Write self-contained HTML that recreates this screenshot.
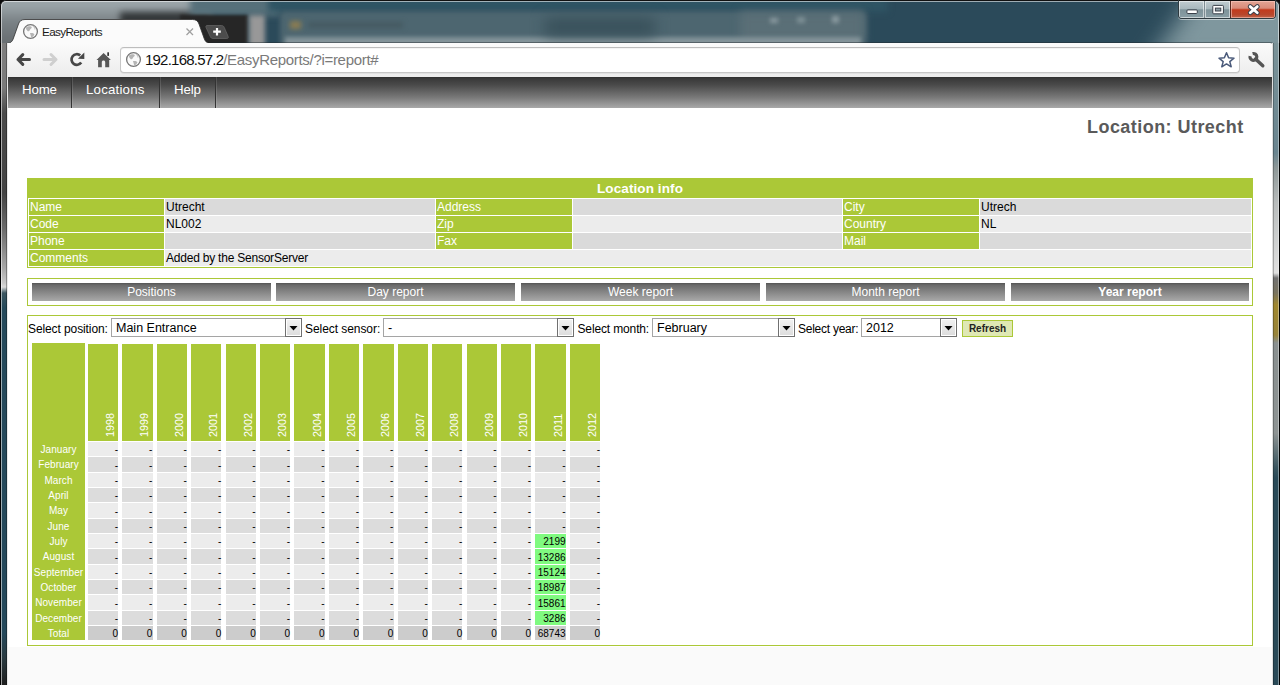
<!DOCTYPE html><html><head><meta charset='utf-8'><style>
*{box-sizing:border-box}
html,body{margin:0;padding:0}
body{width:1280px;height:685px;overflow:hidden;position:relative;background:#0a0a0a;font-family:"Liberation Sans",sans-serif}
.abs{position:absolute}
.t{position:absolute;white-space:nowrap;line-height:1}
</style></head><body>
<div class='abs' style='left:0;top:0;width:1280px;height:685px;background:#2b4a5a;overflow:hidden;border-radius:7px 7px 0 0'>
<div class='abs' style='left:-20px;top:-10px;width:230px;height:60px;background:linear-gradient(180deg,#a2acb0 0px,#9aa4a8 16px,#7c8488 30px,#6a7073 50px);filter:blur(3px)'></div>
<div class='abs' style='left:120px;top:12px;width:90px;height:14px;background:#333739;filter:blur(3px)'></div>
<div class='abs' style='left:190px;top:-10px;width:90px;height:26px;background:#56707a;filter:blur(3px)'></div>
<div class='abs' style='left:180px;top:15px;width:68px;height:40px;background:#262626;filter:blur(1.5px)'></div>
<div class='abs' style='left:249px;top:15px;width:16px;height:40px;background:#989898;filter:blur(2.5px)'></div>
<div class='abs' style='left:268px;top:-10px;width:620px;height:22px;background:#2f5464;filter:blur(3px)'></div>
<div class='abs' style='left:280px;top:11px;width:586px;height:40px;background:#4d6670;filter:blur(2.5px);border-radius:5px'></div><div class='abs' style='left:740px;top:12px;width:124px;height:30px;background:#5a6f77;filter:blur(5px)'></div><div class='abs' style='left:770px;top:18px;width:8px;height:5px;background:#8a9aa0;filter:blur(2px)'></div><div class='abs' style='left:797px;top:17px;width:8px;height:6px;background:#7e9096;filter:blur(2px)'></div><div class='abs' style='left:832px;top:16px;width:7px;height:7px;background:#8a9aa0;filter:blur(2px)'></div>
<div class='abs' style='left:285px;top:37px;width:576px;height:10px;background:#84949a;filter:blur(2px)'></div>
<div class='abs' style='left:545px;top:18px;width:110px;height:18px;background:#38505a;filter:blur(7px)'></div>
<div class='abs' style='left:290px;top:21px;width:11px;height:8px;background:#8a7c52;filter:blur(2.5px)'></div>
<div class='abs' style='left:308px;top:22px;width:95px;height:6px;background:#465a62;filter:blur(2.5px)'></div>
<div class='abs' style='left:1175px;top:-20px;width:200px;height:90px;background:#7f979e;transform:skewX(-35deg);filter:blur(14px)'></div>
</div>
<div class='abs' style='left:0;top:0;width:1280px;height:685px;border:1px solid #111;border-bottom:none;border-radius:6px 6px 0 0'></div>
<div class='abs' style='left:1px;top:1px;width:1278px;height:684px;border:1px solid rgba(255,255,255,0.55);border-bottom:none;border-radius:5px 5px 0 0'></div>
<svg class='abs' style='left:0;top:0' width='260' height='44'>
<path d='M6 43.5 C11 43.5 12.5 41 13.5 38 L18.5 24 C19.5 21 21.5 19.5 25 19.5 L192.5 19.5 C196 19.5 198 21 199 24 L204 38 C205 41 206.5 43.5 211.5 43.5 Z' fill='#fbfbfb' stroke='#2e2e2e' stroke-width='0.8'/>
<path d='M207 25.5 L221.5 25.5 C223 25.5 223.8 26.3 224.3 27.5 L228.2 36.5 C228.6 37.6 228.2 38.5 226.8 38.5 L213 38.5 C211.5 38.5 210.6 37.8 210.2 36.5 L206 27.5 C205.6 26.2 206 25.5 207 25.5 Z' fill='#4c4c4c' stroke='#6e6e6e' stroke-width='0.6'/>
<path d='M217 28 V35.5 M213.2 31.7 H220.8' stroke='#fff' stroke-width='2.2'/>
<path d='M186.5 28.5 L193 35 M193 28.5 L186.5 35' stroke='#a0a0a0' stroke-width='1.3'/>
<circle cx='30.5' cy='31.5' r='6.9' fill='#fafafa' stroke='#767676' stroke-width='1.3'/>
<path d='M25.9 27.7 C27.5 25.9 31.0 25.7 31.7 27.1 C32.1 28.1 30.5 28.9 29.9 29.9 C29.3 31.1 28.3 31.7 27.5 30.9 C26.7 30.1 26.1 29.3 25.9 27.7 Z' fill='#b4b4b4'/>
<path d='M29.9 33.3 C31.3 32.7 33.5 32.9 34.3 34.1 C34.7 35.1 33.1 36.9 31.5 37.5 C30.7 36.5 30.9 35.3 29.9 33.3 Z' fill='#b4b4b4'/>
<path d='M33.0 26.0 C34.5 27.0 35.5 28.5 34.7 29.5' stroke='#c4c4c4' stroke-width='1.2' fill='none'/>
</svg>
<div class='t' style='left:42px;top:25.5px;font-size:11.7px;color:#1a1a1a;letter-spacing:-0.62px'>EasyReports</div>
<div class='abs' style='left:210px;top:42px;width:1064px;height:35px;background:rgba(30,40,45,0.45);border-radius:4px 4px 0 0'></div>
<div class='abs' style='left:8px;top:43px;width:1265px;height:34px;background:linear-gradient(180deg,#fbfbfb,#ececec);border-radius:0 3px 0 0'></div>
<div class='abs' style='left:120px;top:47px;width:1120px;height:26px;background:#fff;border:1px solid #c6c6c6;border-top-color:#bdbdbd;border-radius:4px;box-shadow:inset 0 1px 1px rgba(0,0,0,0.05),0 1px 0 rgba(0,0,0,0.06)'></div>
<svg class='abs' style='left:0;top:43px' width='1280' height='34'>
<path d='M18 16.5 H29.5 M18 16.5 L22.8 11.6 M18 16.5 L22.8 21.4' stroke='#474747' stroke-width='3' fill='none' stroke-linecap='round'/>
<path d='M56 16.5 H44 M56 16.5 L51 11.5 M56 16.5 L51 21.5' stroke='#cfcfcf' stroke-width='3' fill='none' stroke-linecap='round'/>
<path d='M81.22 19.5 A5.3 5.3 0 1 1 80.2 12.4' stroke='#474747' stroke-width='2.7' fill='none'/>
<path d='M84.3 9.6 L84.3 16 L77.9 15.8 Z' fill='#474747'/>
<path d='M96.5 17 L103.6 10 L110.9 17 L109.2 17 L109.2 24.2 L105.2 24.2 L105.2 19.2 C105.2 18.2 104.5 17.6 103.5 17.6 C102.5 17.6 101.8 18.2 101.8 19.2 L101.8 24.2 L98.1 24.2 L98.1 17 Z' fill='#575757'/>
<rect x='107.3' y='9.3' width='1.7' height='3.6' fill='#333'/>
<circle cx='133.5' cy='16.5' r='6.9' fill='#fafafa' stroke='#767676' stroke-width='1.3'/>
<path d='M128.9 12.7 C130.5 10.9 134.0 10.7 134.7 12.1 C135.1 13.1 133.5 13.9 132.9 14.9 C132.3 16.1 131.3 16.7 130.5 15.9 C129.7 15.1 129.1 14.3 128.9 12.7 Z' fill='#b4b4b4'/>
<path d='M132.9 18.3 C134.3 17.7 136.5 17.9 137.3 19.1 C137.7 20.1 136.1 21.9 134.5 22.5 C133.7 21.5 133.9 20.3 132.9 18.3 Z' fill='#b4b4b4'/>
<path d='M136.0 11.0 C137.5 12.0 138.5 13.5 137.7 14.5' stroke='#c4c4c4' stroke-width='1.2' fill='none'/>
<path d='M1226.5 9.8 L1228.6 14.8 L1234 15.2 L1229.8 18.6 L1231.2 23.8 L1226.5 20.9 L1221.8 23.8 L1223.2 18.6 L1219 15.2 L1224.4 14.8 Z' fill='#fff' stroke='#4a5a7a' stroke-width='1.5' stroke-linejoin='round'/>
<path d='M1255.5 16 L1262.8 22.8' stroke='#555' stroke-width='3.4' stroke-linecap='round'/>
<path d='M1252.6 10.6 A3.4 3.4 0 1 1 1250.1 13.1' stroke='#555' stroke-width='3.2' fill='none'/>
</svg>
<div class='t' style='left:145px;top:52px;font-size:15px;color:#111'><span style='letter-spacing:-0.78px'>192.168.57.2</span><span style='color:#7a7a7a;letter-spacing:-0.31px'>/EasyReports/?i=report#</span></div>
<div class='abs' style='left:1178px;top:0px;width:98px;height:19px;border:1px solid #2e3a40;border-top:none;border-radius:0 0 4px 4px;overflow:hidden;box-shadow:0 1px 0 rgba(255,255,255,0.5)'>
<div class='abs' style='left:0;top:1px;width:25px;height:17px;background:linear-gradient(180deg,#c0ccd0 0%,#a8b8bd 45%,#7e939a 52%,#8a9ea5 100%);box-shadow:inset 0 0 0 1px rgba(255,255,255,0.55)'></div>
<div class='abs' style='left:25px;top:1px;width:1px;height:17px;background:#7d8c92'></div>
<div class='abs' style='left:26px;top:1px;width:25px;height:17px;background:linear-gradient(180deg,#c0ccd0 0%,#a8b8bd 45%,#7e939a 52%,#8a9ea5 100%);box-shadow:inset 0 0 0 1px rgba(255,255,255,0.55)'></div>
<div class='abs' style='left:51px;top:1px;width:1px;height:17px;background:#5a2a20'></div>
<div class='abs' style='left:52px;top:1px;width:44px;height:17px;background:linear-gradient(180deg,#e3a595 0%,#d98c7a 42%,#c23b1d 52%,#b8472c 80%,#c0644a 100%);box-shadow:inset 0 0 0 1px rgba(255,210,200,0.55)'></div>
<div class='abs' style='left:0;top:0;width:98px;height:1px;background:#111'></div>
</div>
<svg class='abs' style='left:1170px;top:0' width='110' height='22'>
<rect x='16.9' y='9.9' width='10.4' height='3.6' rx='1' fill='#fff' stroke='#3a404a' stroke-width='1'/>
<rect x='42.8' y='5.4' width='10.6' height='8.4' rx='0.8' fill='#fff' stroke='#3a404a' stroke-width='1'/>
<rect x='45.4' y='8.1' width='5.4' height='2.9' fill='#8ea0a6' stroke='#3a404a' stroke-width='1'/>
<path d='M80.2 6.6 L87.3 12.7 M87.3 6.6 L80.2 12.7' stroke='#3a404a' stroke-width='4.8' stroke-linecap='round'/>
<path d='M80.2 6.6 L87.3 12.7 M87.3 6.6 L80.2 12.7' stroke='#fff' stroke-width='2.8' stroke-linecap='round'/>
</svg>
<div class='abs' style='left:0;top:43px;width:8px;height:642px;background:linear-gradient(180deg,#7e7e7e 0px,#7a7a7a 45px,#4a4a4a 70px,#434343 150px,#6a6a6a 185px,#a8a8a8 225px,#c8c8c8 240px,#dadada 244px,#3c5660 250px,#25495a 265px,#24485a 590px,#2a3a40 615px,#1e1e1e 642px)'></div>
<div class='abs' style='left:0;top:43px;width:1px;height:642px;background:#000'></div>
<div class='abs' style='left:1px;top:43px;width:1px;height:642px;background:rgba(255,255,255,0.55)'></div>
<div class='abs' style='left:6px;top:43px;width:1px;height:642px;background:rgba(0,0,0,0.3)'></div>
<div class='abs' style='left:7px;top:43px;width:1px;height:642px;background:#e8e8e8'></div>
<div class='abs' style='left:1272px;top:43px;width:8px;height:642px;background:linear-gradient(180deg,#7a9298 0px,#6a8590 110px,#8e9898 125px,#b8bcbc 160px,#e0e0e0 230px,#727272 235px,#7a7460 250px,#a08830 262px,#98843a 292px,#8a9090 300px,#8e9494 390px,#3a5660 425px,#2a4a58 435px,#2a4a58 642px)'></div>
<div class='abs' style='left:1279px;top:43px;width:1px;height:642px;background:#000'></div>
<div class='abs' style='left:1278px;top:43px;width:1px;height:642px;background:rgba(255,255,255,0.4)'></div>
<div class='abs' style='left:1273px;top:43px;width:1px;height:642px;background:rgba(0,0,0,0.25)'></div>
<div class='abs' style='left:1272px;top:43px;width:1px;height:642px;background:#e0e0e0'></div>
<div class='abs' style='left:8px;top:77px;width:1264px;height:608px;background:#fafafa'></div>
<div class='abs' style='left:8px;top:77px;width:1264px;height:570px;background:#fff'></div>
<div class='abs' style='left:8px;top:77px;width:1264px;height:31px;background:linear-gradient(180deg,#2e2e2e 0px,#3a3a3a 2px,#4a4a4a 8px,#777 20px,#a8a8a8 31px)'></div>
<div class='abs' style='left:71px;top:77px;width:1px;height:31px;background:#333'></div><div class='abs' style='left:72px;top:77px;width:1px;height:31px;background:rgba(255,255,255,0.12)'></div>
<div class='abs' style='left:159px;top:77px;width:1px;height:31px;background:#333'></div><div class='abs' style='left:160px;top:77px;width:1px;height:31px;background:rgba(255,255,255,0.12)'></div>
<div class='abs' style='left:215px;top:77px;width:1px;height:31px;background:#333'></div><div class='abs' style='left:216px;top:77px;width:1px;height:31px;background:rgba(255,255,255,0.12)'></div>
<div class='t' style='left:22px;top:83.3px;font-size:13.3px;color:#fff;letter-spacing:-0.15px'>Home</div>
<div class='t' style='left:86px;top:83.3px;font-size:13.3px;color:#fff;letter-spacing:0.18px'>Locations</div>
<div class='t' style='left:174px;top:83.3px;font-size:13.3px;color:#fff;letter-spacing:-0.15px'>Help</div>
<div class='t' style='left:1087px;top:118px;font-size:18px;font-weight:bold;color:#5a5a5a;letter-spacing:0.45px'>Location: Utrecht</div>
<div class='abs' style='left:27px;top:178px;width:1226px;height:90px;border:1px solid #abc837;background:#fff'></div>
<div class='abs' style='left:28px;top:179px;width:1224px;height:19px;background:#abc837'></div>
<div class='t' style='left:28px;width:1224px;text-align:center;top:182px;font-size:13.5px;font-weight:bold;color:#fff;letter-spacing:0.1px'>Location info</div>
<div class='abs' style='left:29px;top:199px;width:135px;height:16px;background:#abc837'></div>
<div class='t' style='left:30px;top:201px;font-size:12px;color:#fff'>Name</div>
<div class='abs' style='left:165px;top:199px;width:270px;height:16px;background:#dadada'></div>
<div class='t' style='left:166px;top:201px;font-size:12px;color:#000'>Utrecht</div>
<div class='abs' style='left:436px;top:199px;width:136px;height:16px;background:#abc837'></div>
<div class='t' style='left:437px;top:201px;font-size:12px;color:#fff'>Address</div>
<div class='abs' style='left:573px;top:199px;width:269px;height:16px;background:#dadada'></div>
<div class='abs' style='left:843px;top:199px;width:136px;height:16px;background:#abc837'></div>
<div class='t' style='left:844px;top:201px;font-size:12px;color:#fff'>City</div>
<div class='abs' style='left:980px;top:199px;width:271px;height:16px;background:#dadada'></div>
<div class='t' style='left:981px;top:201px;font-size:12px;color:#000'>Utrech</div>
<div class='abs' style='left:29px;top:216px;width:135px;height:16px;background:#abc837'></div>
<div class='t' style='left:30px;top:218px;font-size:12px;color:#fff'>Code</div>
<div class='abs' style='left:165px;top:216px;width:270px;height:16px;background:#ececec'></div>
<div class='t' style='left:166px;top:218px;font-size:12px;color:#000'>NL002</div>
<div class='abs' style='left:436px;top:216px;width:136px;height:16px;background:#abc837'></div>
<div class='t' style='left:437px;top:218px;font-size:12px;color:#fff'>Zip</div>
<div class='abs' style='left:573px;top:216px;width:269px;height:16px;background:#ececec'></div>
<div class='abs' style='left:843px;top:216px;width:136px;height:16px;background:#abc837'></div>
<div class='t' style='left:844px;top:218px;font-size:12px;color:#fff'>Country</div>
<div class='abs' style='left:980px;top:216px;width:271px;height:16px;background:#ececec'></div>
<div class='t' style='left:981px;top:218px;font-size:12px;color:#000'>NL</div>
<div class='abs' style='left:29px;top:233px;width:135px;height:16px;background:#abc837'></div>
<div class='t' style='left:30px;top:235px;font-size:12px;color:#fff'>Phone</div>
<div class='abs' style='left:165px;top:233px;width:270px;height:16px;background:#dadada'></div>
<div class='abs' style='left:436px;top:233px;width:136px;height:16px;background:#abc837'></div>
<div class='t' style='left:437px;top:235px;font-size:12px;color:#fff'>Fax</div>
<div class='abs' style='left:573px;top:233px;width:269px;height:16px;background:#dadada'></div>
<div class='abs' style='left:843px;top:233px;width:136px;height:16px;background:#abc837'></div>
<div class='t' style='left:844px;top:235px;font-size:12px;color:#fff'>Mail</div>
<div class='abs' style='left:980px;top:233px;width:271px;height:16px;background:#dadada'></div>
<div class='abs' style='left:29px;top:250px;width:135px;height:16px;background:#abc837'></div>
<div class='t' style='left:30px;top:252px;font-size:12px;color:#fff'>Comments</div>
<div class='abs' style='left:165px;top:250px;width:1086px;height:16px;background:#ececec'></div>
<div class='t' style='left:166px;top:252px;font-size:12px;color:#000;letter-spacing:-0.22px'>Added by the SensorServer</div>
<div class='abs' style='left:27px;top:278px;width:1226px;height:28px;border:1px solid #abc837'></div>
<div class='abs' style='left:32px;top:283px;width:239px;height:18px;background:linear-gradient(180deg,#555 0,#5e5e5e 1px,#6a6a6a 2px,#a9a9a9 100%)'></div>
<div class='t' style='left:32px;width:239px;text-align:center;top:286px;font-size:12px;color:#fff;'>Positions</div>
<div class='abs' style='left:276px;top:283px;width:239px;height:18px;background:linear-gradient(180deg,#555 0,#5e5e5e 1px,#6a6a6a 2px,#a9a9a9 100%)'></div>
<div class='t' style='left:276px;width:239px;text-align:center;top:286px;font-size:12px;color:#fff;'>Day report</div>
<div class='abs' style='left:521px;top:283px;width:239px;height:18px;background:linear-gradient(180deg,#555 0,#5e5e5e 1px,#6a6a6a 2px,#a9a9a9 100%)'></div>
<div class='t' style='left:521px;width:239px;text-align:center;top:286px;font-size:12px;color:#fff;'>Week report</div>
<div class='abs' style='left:766px;top:283px;width:239px;height:18px;background:linear-gradient(180deg,#555 0,#5e5e5e 1px,#6a6a6a 2px,#a9a9a9 100%)'></div>
<div class='t' style='left:766px;width:239px;text-align:center;top:286px;font-size:12px;color:#fff;'>Month report</div>
<div class='abs' style='left:1011px;top:283px;width:238px;height:18px;background:linear-gradient(180deg,#555 0,#5e5e5e 1px,#6a6a6a 2px,#a9a9a9 100%)'></div>
<div class='t' style='left:1011px;width:238px;text-align:center;top:286px;font-size:12px;color:#fff;font-weight:bold;'>Year report</div>
<div class='abs' style='left:27px;top:315px;width:1226px;height:331px;border:1px solid #abc837'></div>
<div class='abs' style='left:111px;top:318px;width:191px;height:19px;border:1px solid #a5a5a5;background:#fff'></div>
<div class='t' style='left:116px;top:322px;font-size:12.5px;color:#000'>Main Entrance</div>
<div class='abs' style='left:285px;top:318px;width:17px;height:19px;border:1px solid #707070;background:linear-gradient(180deg,#f2f2f2,#dcdcdc);box-shadow:inset 0 0 0 1px #fff'></div>
<svg class='abs' style='left:285px;top:318px' width='17' height='19'><path d='M4.5 8 L12.5 8 L8.5 12.5 Z' fill='#000'/></svg>
<div class='abs' style='left:383px;top:318px;width:191px;height:19px;border:1px solid #a5a5a5;background:#fff'></div>
<div class='t' style='left:388px;top:322px;font-size:12.5px;color:#000'>-</div>
<div class='abs' style='left:557px;top:318px;width:17px;height:19px;border:1px solid #707070;background:linear-gradient(180deg,#f2f2f2,#dcdcdc);box-shadow:inset 0 0 0 1px #fff'></div>
<svg class='abs' style='left:557px;top:318px' width='17' height='19'><path d='M4.5 8 L12.5 8 L8.5 12.5 Z' fill='#000'/></svg>
<div class='abs' style='left:652px;top:318px;width:143px;height:19px;border:1px solid #a5a5a5;background:#fff'></div>
<div class='t' style='left:657px;top:322px;font-size:12.5px;color:#000'>February</div>
<div class='abs' style='left:778px;top:318px;width:17px;height:19px;border:1px solid #707070;background:linear-gradient(180deg,#f2f2f2,#dcdcdc);box-shadow:inset 0 0 0 1px #fff'></div>
<svg class='abs' style='left:778px;top:318px' width='17' height='19'><path d='M4.5 8 L12.5 8 L8.5 12.5 Z' fill='#000'/></svg>
<div class='abs' style='left:861px;top:318px;width:96px;height:19px;border:1px solid #a5a5a5;background:#fff'></div>
<div class='t' style='left:866px;top:322px;font-size:12.5px;color:#000'>2012</div>
<div class='abs' style='left:940px;top:318px;width:17px;height:19px;border:1px solid #707070;background:linear-gradient(180deg,#f2f2f2,#dcdcdc);box-shadow:inset 0 0 0 1px #fff'></div>
<svg class='abs' style='left:940px;top:318px' width='17' height='19'><path d='M4.5 8 L12.5 8 L8.5 12.5 Z' fill='#000'/></svg>
<div class='t' style='left:28px;top:322.5px;font-size:12px;color:#000;letter-spacing:-0.1px'>Select position:</div>
<div class='t' style='left:305px;top:322.5px;font-size:12px;color:#000;letter-spacing:-0.06px'>Select sensor:</div>
<div class='t' style='left:577.5px;top:322.5px;font-size:12px;color:#000;letter-spacing:-0.14px'>Select month:</div>
<div class='t' style='left:798px;top:322.5px;font-size:12px;color:#000;letter-spacing:-0.25px'>Select year:</div>
<div class='abs' style='left:962px;top:320px;width:51px;height:17px;border:1px solid #abc837;background:#dfe8b4'></div>
<div class='t' style='left:962px;width:51px;text-align:center;top:324px;font-size:10px;font-weight:bold;color:#222'>Refresh</div>
<div class='abs' style='left:32px;top:343px;width:53px;height:297px;background:#abc837'></div>
<div class='abs' style='left:87.80px;top:344px;width:30.4px;height:97px;background:#abc837'></div>
<div class='t' style='left:105.00px;top:436.5px;font-size:10.8px;color:#fff;transform-origin:0 0;transform:rotate(-90deg)'>1998</div>
<div class='abs' style='left:122.23px;top:344px;width:30.4px;height:97px;background:#abc837'></div>
<div class='t' style='left:139.43px;top:436.5px;font-size:10.8px;color:#fff;transform-origin:0 0;transform:rotate(-90deg)'>1999</div>
<div class='abs' style='left:156.66px;top:344px;width:30.4px;height:97px;background:#abc837'></div>
<div class='t' style='left:173.86px;top:436.5px;font-size:10.8px;color:#fff;transform-origin:0 0;transform:rotate(-90deg)'>2000</div>
<div class='abs' style='left:191.09px;top:344px;width:30.4px;height:97px;background:#abc837'></div>
<div class='t' style='left:208.29px;top:436.5px;font-size:10.8px;color:#fff;transform-origin:0 0;transform:rotate(-90deg)'>2001</div>
<div class='abs' style='left:225.52px;top:344px;width:30.4px;height:97px;background:#abc837'></div>
<div class='t' style='left:242.72px;top:436.5px;font-size:10.8px;color:#fff;transform-origin:0 0;transform:rotate(-90deg)'>2002</div>
<div class='abs' style='left:259.95px;top:344px;width:30.4px;height:97px;background:#abc837'></div>
<div class='t' style='left:277.15px;top:436.5px;font-size:10.8px;color:#fff;transform-origin:0 0;transform:rotate(-90deg)'>2003</div>
<div class='abs' style='left:294.38px;top:344px;width:30.4px;height:97px;background:#abc837'></div>
<div class='t' style='left:311.58px;top:436.5px;font-size:10.8px;color:#fff;transform-origin:0 0;transform:rotate(-90deg)'>2004</div>
<div class='abs' style='left:328.81px;top:344px;width:30.4px;height:97px;background:#abc837'></div>
<div class='t' style='left:346.01px;top:436.5px;font-size:10.8px;color:#fff;transform-origin:0 0;transform:rotate(-90deg)'>2005</div>
<div class='abs' style='left:363.24px;top:344px;width:30.4px;height:97px;background:#abc837'></div>
<div class='t' style='left:380.44px;top:436.5px;font-size:10.8px;color:#fff;transform-origin:0 0;transform:rotate(-90deg)'>2006</div>
<div class='abs' style='left:397.67px;top:344px;width:30.4px;height:97px;background:#abc837'></div>
<div class='t' style='left:414.87px;top:436.5px;font-size:10.8px;color:#fff;transform-origin:0 0;transform:rotate(-90deg)'>2007</div>
<div class='abs' style='left:432.10px;top:344px;width:30.4px;height:97px;background:#abc837'></div>
<div class='t' style='left:449.30px;top:436.5px;font-size:10.8px;color:#fff;transform-origin:0 0;transform:rotate(-90deg)'>2008</div>
<div class='abs' style='left:466.53px;top:344px;width:30.4px;height:97px;background:#abc837'></div>
<div class='t' style='left:483.73px;top:436.5px;font-size:10.8px;color:#fff;transform-origin:0 0;transform:rotate(-90deg)'>2009</div>
<div class='abs' style='left:500.96px;top:344px;width:30.4px;height:97px;background:#abc837'></div>
<div class='t' style='left:518.16px;top:436.5px;font-size:10.8px;color:#fff;transform-origin:0 0;transform:rotate(-90deg)'>2010</div>
<div class='abs' style='left:535.39px;top:344px;width:30.4px;height:97px;background:#abc837'></div>
<div class='t' style='left:552.59px;top:436.5px;font-size:10.8px;color:#fff;transform-origin:0 0;transform:rotate(-90deg)'>2011</div>
<div class='abs' style='left:569.82px;top:344px;width:30.4px;height:97px;background:#abc837'></div>
<div class='t' style='left:587.02px;top:436.5px;font-size:10.8px;color:#fff;transform-origin:0 0;transform:rotate(-90deg)'>2012</div>
<div class='t' style='left:32px;width:53px;text-align:center;top:445.00px;font-size:10px;color:#fff;letter-spacing:0.05px'>January</div>
<div class='abs' style='left:87.80px;top:442.00px;width:30.4px;height:14.33px;background:#ececec'></div>
<div class='t' style='left:87.80px;width:30.2px;text-align:right;top:445.20px;font-size:10px;color:#000'>-</div>
<div class='abs' style='left:122.23px;top:442.00px;width:30.4px;height:14.33px;background:#ececec'></div>
<div class='t' style='left:122.23px;width:30.2px;text-align:right;top:445.20px;font-size:10px;color:#000'>-</div>
<div class='abs' style='left:156.66px;top:442.00px;width:30.4px;height:14.33px;background:#ececec'></div>
<div class='t' style='left:156.66px;width:30.2px;text-align:right;top:445.20px;font-size:10px;color:#000'>-</div>
<div class='abs' style='left:191.09px;top:442.00px;width:30.4px;height:14.33px;background:#ececec'></div>
<div class='t' style='left:191.09px;width:30.2px;text-align:right;top:445.20px;font-size:10px;color:#000'>-</div>
<div class='abs' style='left:225.52px;top:442.00px;width:30.4px;height:14.33px;background:#ececec'></div>
<div class='t' style='left:225.52px;width:30.2px;text-align:right;top:445.20px;font-size:10px;color:#000'>-</div>
<div class='abs' style='left:259.95px;top:442.00px;width:30.4px;height:14.33px;background:#ececec'></div>
<div class='t' style='left:259.95px;width:30.2px;text-align:right;top:445.20px;font-size:10px;color:#000'>-</div>
<div class='abs' style='left:294.38px;top:442.00px;width:30.4px;height:14.33px;background:#ececec'></div>
<div class='t' style='left:294.38px;width:30.2px;text-align:right;top:445.20px;font-size:10px;color:#000'>-</div>
<div class='abs' style='left:328.81px;top:442.00px;width:30.4px;height:14.33px;background:#ececec'></div>
<div class='t' style='left:328.81px;width:30.2px;text-align:right;top:445.20px;font-size:10px;color:#000'>-</div>
<div class='abs' style='left:363.24px;top:442.00px;width:30.4px;height:14.33px;background:#ececec'></div>
<div class='t' style='left:363.24px;width:30.2px;text-align:right;top:445.20px;font-size:10px;color:#000'>-</div>
<div class='abs' style='left:397.67px;top:442.00px;width:30.4px;height:14.33px;background:#ececec'></div>
<div class='t' style='left:397.67px;width:30.2px;text-align:right;top:445.20px;font-size:10px;color:#000'>-</div>
<div class='abs' style='left:432.10px;top:442.00px;width:30.4px;height:14.33px;background:#ececec'></div>
<div class='t' style='left:432.10px;width:30.2px;text-align:right;top:445.20px;font-size:10px;color:#000'>-</div>
<div class='abs' style='left:466.53px;top:442.00px;width:30.4px;height:14.33px;background:#ececec'></div>
<div class='t' style='left:466.53px;width:30.2px;text-align:right;top:445.20px;font-size:10px;color:#000'>-</div>
<div class='abs' style='left:500.96px;top:442.00px;width:30.4px;height:14.33px;background:#ececec'></div>
<div class='t' style='left:500.96px;width:30.2px;text-align:right;top:445.20px;font-size:10px;color:#000'>-</div>
<div class='abs' style='left:535.39px;top:442.00px;width:30.4px;height:14.33px;background:#ececec'></div>
<div class='t' style='left:535.39px;width:30.2px;text-align:right;top:445.20px;font-size:10px;color:#000'>-</div>
<div class='abs' style='left:569.82px;top:442.00px;width:30.4px;height:14.33px;background:#ececec'></div>
<div class='t' style='left:569.82px;width:30.2px;text-align:right;top:445.20px;font-size:10px;color:#000'>-</div>
<div class='t' style='left:32px;width:53px;text-align:center;top:460.33px;font-size:10px;color:#fff;letter-spacing:0.05px'>February</div>
<div class='abs' style='left:87.80px;top:457.33px;width:30.4px;height:14.33px;background:#dcdcdc'></div>
<div class='t' style='left:87.80px;width:30.2px;text-align:right;top:460.53px;font-size:10px;color:#000'>-</div>
<div class='abs' style='left:122.23px;top:457.33px;width:30.4px;height:14.33px;background:#dcdcdc'></div>
<div class='t' style='left:122.23px;width:30.2px;text-align:right;top:460.53px;font-size:10px;color:#000'>-</div>
<div class='abs' style='left:156.66px;top:457.33px;width:30.4px;height:14.33px;background:#dcdcdc'></div>
<div class='t' style='left:156.66px;width:30.2px;text-align:right;top:460.53px;font-size:10px;color:#000'>-</div>
<div class='abs' style='left:191.09px;top:457.33px;width:30.4px;height:14.33px;background:#dcdcdc'></div>
<div class='t' style='left:191.09px;width:30.2px;text-align:right;top:460.53px;font-size:10px;color:#000'>-</div>
<div class='abs' style='left:225.52px;top:457.33px;width:30.4px;height:14.33px;background:#dcdcdc'></div>
<div class='t' style='left:225.52px;width:30.2px;text-align:right;top:460.53px;font-size:10px;color:#000'>-</div>
<div class='abs' style='left:259.95px;top:457.33px;width:30.4px;height:14.33px;background:#dcdcdc'></div>
<div class='t' style='left:259.95px;width:30.2px;text-align:right;top:460.53px;font-size:10px;color:#000'>-</div>
<div class='abs' style='left:294.38px;top:457.33px;width:30.4px;height:14.33px;background:#dcdcdc'></div>
<div class='t' style='left:294.38px;width:30.2px;text-align:right;top:460.53px;font-size:10px;color:#000'>-</div>
<div class='abs' style='left:328.81px;top:457.33px;width:30.4px;height:14.33px;background:#dcdcdc'></div>
<div class='t' style='left:328.81px;width:30.2px;text-align:right;top:460.53px;font-size:10px;color:#000'>-</div>
<div class='abs' style='left:363.24px;top:457.33px;width:30.4px;height:14.33px;background:#dcdcdc'></div>
<div class='t' style='left:363.24px;width:30.2px;text-align:right;top:460.53px;font-size:10px;color:#000'>-</div>
<div class='abs' style='left:397.67px;top:457.33px;width:30.4px;height:14.33px;background:#dcdcdc'></div>
<div class='t' style='left:397.67px;width:30.2px;text-align:right;top:460.53px;font-size:10px;color:#000'>-</div>
<div class='abs' style='left:432.10px;top:457.33px;width:30.4px;height:14.33px;background:#dcdcdc'></div>
<div class='t' style='left:432.10px;width:30.2px;text-align:right;top:460.53px;font-size:10px;color:#000'>-</div>
<div class='abs' style='left:466.53px;top:457.33px;width:30.4px;height:14.33px;background:#dcdcdc'></div>
<div class='t' style='left:466.53px;width:30.2px;text-align:right;top:460.53px;font-size:10px;color:#000'>-</div>
<div class='abs' style='left:500.96px;top:457.33px;width:30.4px;height:14.33px;background:#dcdcdc'></div>
<div class='t' style='left:500.96px;width:30.2px;text-align:right;top:460.53px;font-size:10px;color:#000'>-</div>
<div class='abs' style='left:535.39px;top:457.33px;width:30.4px;height:14.33px;background:#dcdcdc'></div>
<div class='t' style='left:535.39px;width:30.2px;text-align:right;top:460.53px;font-size:10px;color:#000'>-</div>
<div class='abs' style='left:569.82px;top:457.33px;width:30.4px;height:14.33px;background:#dcdcdc'></div>
<div class='t' style='left:569.82px;width:30.2px;text-align:right;top:460.53px;font-size:10px;color:#000'>-</div>
<div class='t' style='left:32px;width:53px;text-align:center;top:475.67px;font-size:10px;color:#fff;letter-spacing:0.05px'>March</div>
<div class='abs' style='left:87.80px;top:472.67px;width:30.4px;height:14.33px;background:#ececec'></div>
<div class='t' style='left:87.80px;width:30.2px;text-align:right;top:475.87px;font-size:10px;color:#000'>-</div>
<div class='abs' style='left:122.23px;top:472.67px;width:30.4px;height:14.33px;background:#ececec'></div>
<div class='t' style='left:122.23px;width:30.2px;text-align:right;top:475.87px;font-size:10px;color:#000'>-</div>
<div class='abs' style='left:156.66px;top:472.67px;width:30.4px;height:14.33px;background:#ececec'></div>
<div class='t' style='left:156.66px;width:30.2px;text-align:right;top:475.87px;font-size:10px;color:#000'>-</div>
<div class='abs' style='left:191.09px;top:472.67px;width:30.4px;height:14.33px;background:#ececec'></div>
<div class='t' style='left:191.09px;width:30.2px;text-align:right;top:475.87px;font-size:10px;color:#000'>-</div>
<div class='abs' style='left:225.52px;top:472.67px;width:30.4px;height:14.33px;background:#ececec'></div>
<div class='t' style='left:225.52px;width:30.2px;text-align:right;top:475.87px;font-size:10px;color:#000'>-</div>
<div class='abs' style='left:259.95px;top:472.67px;width:30.4px;height:14.33px;background:#ececec'></div>
<div class='t' style='left:259.95px;width:30.2px;text-align:right;top:475.87px;font-size:10px;color:#000'>-</div>
<div class='abs' style='left:294.38px;top:472.67px;width:30.4px;height:14.33px;background:#ececec'></div>
<div class='t' style='left:294.38px;width:30.2px;text-align:right;top:475.87px;font-size:10px;color:#000'>-</div>
<div class='abs' style='left:328.81px;top:472.67px;width:30.4px;height:14.33px;background:#ececec'></div>
<div class='t' style='left:328.81px;width:30.2px;text-align:right;top:475.87px;font-size:10px;color:#000'>-</div>
<div class='abs' style='left:363.24px;top:472.67px;width:30.4px;height:14.33px;background:#ececec'></div>
<div class='t' style='left:363.24px;width:30.2px;text-align:right;top:475.87px;font-size:10px;color:#000'>-</div>
<div class='abs' style='left:397.67px;top:472.67px;width:30.4px;height:14.33px;background:#ececec'></div>
<div class='t' style='left:397.67px;width:30.2px;text-align:right;top:475.87px;font-size:10px;color:#000'>-</div>
<div class='abs' style='left:432.10px;top:472.67px;width:30.4px;height:14.33px;background:#ececec'></div>
<div class='t' style='left:432.10px;width:30.2px;text-align:right;top:475.87px;font-size:10px;color:#000'>-</div>
<div class='abs' style='left:466.53px;top:472.67px;width:30.4px;height:14.33px;background:#ececec'></div>
<div class='t' style='left:466.53px;width:30.2px;text-align:right;top:475.87px;font-size:10px;color:#000'>-</div>
<div class='abs' style='left:500.96px;top:472.67px;width:30.4px;height:14.33px;background:#ececec'></div>
<div class='t' style='left:500.96px;width:30.2px;text-align:right;top:475.87px;font-size:10px;color:#000'>-</div>
<div class='abs' style='left:535.39px;top:472.67px;width:30.4px;height:14.33px;background:#ececec'></div>
<div class='t' style='left:535.39px;width:30.2px;text-align:right;top:475.87px;font-size:10px;color:#000'>-</div>
<div class='abs' style='left:569.82px;top:472.67px;width:30.4px;height:14.33px;background:#ececec'></div>
<div class='t' style='left:569.82px;width:30.2px;text-align:right;top:475.87px;font-size:10px;color:#000'>-</div>
<div class='t' style='left:32px;width:53px;text-align:center;top:491.00px;font-size:10px;color:#fff;letter-spacing:0.05px'>April</div>
<div class='abs' style='left:87.80px;top:488.00px;width:30.4px;height:14.33px;background:#dcdcdc'></div>
<div class='t' style='left:87.80px;width:30.2px;text-align:right;top:491.20px;font-size:10px;color:#000'>-</div>
<div class='abs' style='left:122.23px;top:488.00px;width:30.4px;height:14.33px;background:#dcdcdc'></div>
<div class='t' style='left:122.23px;width:30.2px;text-align:right;top:491.20px;font-size:10px;color:#000'>-</div>
<div class='abs' style='left:156.66px;top:488.00px;width:30.4px;height:14.33px;background:#dcdcdc'></div>
<div class='t' style='left:156.66px;width:30.2px;text-align:right;top:491.20px;font-size:10px;color:#000'>-</div>
<div class='abs' style='left:191.09px;top:488.00px;width:30.4px;height:14.33px;background:#dcdcdc'></div>
<div class='t' style='left:191.09px;width:30.2px;text-align:right;top:491.20px;font-size:10px;color:#000'>-</div>
<div class='abs' style='left:225.52px;top:488.00px;width:30.4px;height:14.33px;background:#dcdcdc'></div>
<div class='t' style='left:225.52px;width:30.2px;text-align:right;top:491.20px;font-size:10px;color:#000'>-</div>
<div class='abs' style='left:259.95px;top:488.00px;width:30.4px;height:14.33px;background:#dcdcdc'></div>
<div class='t' style='left:259.95px;width:30.2px;text-align:right;top:491.20px;font-size:10px;color:#000'>-</div>
<div class='abs' style='left:294.38px;top:488.00px;width:30.4px;height:14.33px;background:#dcdcdc'></div>
<div class='t' style='left:294.38px;width:30.2px;text-align:right;top:491.20px;font-size:10px;color:#000'>-</div>
<div class='abs' style='left:328.81px;top:488.00px;width:30.4px;height:14.33px;background:#dcdcdc'></div>
<div class='t' style='left:328.81px;width:30.2px;text-align:right;top:491.20px;font-size:10px;color:#000'>-</div>
<div class='abs' style='left:363.24px;top:488.00px;width:30.4px;height:14.33px;background:#dcdcdc'></div>
<div class='t' style='left:363.24px;width:30.2px;text-align:right;top:491.20px;font-size:10px;color:#000'>-</div>
<div class='abs' style='left:397.67px;top:488.00px;width:30.4px;height:14.33px;background:#dcdcdc'></div>
<div class='t' style='left:397.67px;width:30.2px;text-align:right;top:491.20px;font-size:10px;color:#000'>-</div>
<div class='abs' style='left:432.10px;top:488.00px;width:30.4px;height:14.33px;background:#dcdcdc'></div>
<div class='t' style='left:432.10px;width:30.2px;text-align:right;top:491.20px;font-size:10px;color:#000'>-</div>
<div class='abs' style='left:466.53px;top:488.00px;width:30.4px;height:14.33px;background:#dcdcdc'></div>
<div class='t' style='left:466.53px;width:30.2px;text-align:right;top:491.20px;font-size:10px;color:#000'>-</div>
<div class='abs' style='left:500.96px;top:488.00px;width:30.4px;height:14.33px;background:#dcdcdc'></div>
<div class='t' style='left:500.96px;width:30.2px;text-align:right;top:491.20px;font-size:10px;color:#000'>-</div>
<div class='abs' style='left:535.39px;top:488.00px;width:30.4px;height:14.33px;background:#dcdcdc'></div>
<div class='t' style='left:535.39px;width:30.2px;text-align:right;top:491.20px;font-size:10px;color:#000'>-</div>
<div class='abs' style='left:569.82px;top:488.00px;width:30.4px;height:14.33px;background:#dcdcdc'></div>
<div class='t' style='left:569.82px;width:30.2px;text-align:right;top:491.20px;font-size:10px;color:#000'>-</div>
<div class='t' style='left:32px;width:53px;text-align:center;top:506.33px;font-size:10px;color:#fff;letter-spacing:0.05px'>May</div>
<div class='abs' style='left:87.80px;top:503.33px;width:30.4px;height:14.33px;background:#ececec'></div>
<div class='t' style='left:87.80px;width:30.2px;text-align:right;top:506.53px;font-size:10px;color:#000'>-</div>
<div class='abs' style='left:122.23px;top:503.33px;width:30.4px;height:14.33px;background:#ececec'></div>
<div class='t' style='left:122.23px;width:30.2px;text-align:right;top:506.53px;font-size:10px;color:#000'>-</div>
<div class='abs' style='left:156.66px;top:503.33px;width:30.4px;height:14.33px;background:#ececec'></div>
<div class='t' style='left:156.66px;width:30.2px;text-align:right;top:506.53px;font-size:10px;color:#000'>-</div>
<div class='abs' style='left:191.09px;top:503.33px;width:30.4px;height:14.33px;background:#ececec'></div>
<div class='t' style='left:191.09px;width:30.2px;text-align:right;top:506.53px;font-size:10px;color:#000'>-</div>
<div class='abs' style='left:225.52px;top:503.33px;width:30.4px;height:14.33px;background:#ececec'></div>
<div class='t' style='left:225.52px;width:30.2px;text-align:right;top:506.53px;font-size:10px;color:#000'>-</div>
<div class='abs' style='left:259.95px;top:503.33px;width:30.4px;height:14.33px;background:#ececec'></div>
<div class='t' style='left:259.95px;width:30.2px;text-align:right;top:506.53px;font-size:10px;color:#000'>-</div>
<div class='abs' style='left:294.38px;top:503.33px;width:30.4px;height:14.33px;background:#ececec'></div>
<div class='t' style='left:294.38px;width:30.2px;text-align:right;top:506.53px;font-size:10px;color:#000'>-</div>
<div class='abs' style='left:328.81px;top:503.33px;width:30.4px;height:14.33px;background:#ececec'></div>
<div class='t' style='left:328.81px;width:30.2px;text-align:right;top:506.53px;font-size:10px;color:#000'>-</div>
<div class='abs' style='left:363.24px;top:503.33px;width:30.4px;height:14.33px;background:#ececec'></div>
<div class='t' style='left:363.24px;width:30.2px;text-align:right;top:506.53px;font-size:10px;color:#000'>-</div>
<div class='abs' style='left:397.67px;top:503.33px;width:30.4px;height:14.33px;background:#ececec'></div>
<div class='t' style='left:397.67px;width:30.2px;text-align:right;top:506.53px;font-size:10px;color:#000'>-</div>
<div class='abs' style='left:432.10px;top:503.33px;width:30.4px;height:14.33px;background:#ececec'></div>
<div class='t' style='left:432.10px;width:30.2px;text-align:right;top:506.53px;font-size:10px;color:#000'>-</div>
<div class='abs' style='left:466.53px;top:503.33px;width:30.4px;height:14.33px;background:#ececec'></div>
<div class='t' style='left:466.53px;width:30.2px;text-align:right;top:506.53px;font-size:10px;color:#000'>-</div>
<div class='abs' style='left:500.96px;top:503.33px;width:30.4px;height:14.33px;background:#ececec'></div>
<div class='t' style='left:500.96px;width:30.2px;text-align:right;top:506.53px;font-size:10px;color:#000'>-</div>
<div class='abs' style='left:535.39px;top:503.33px;width:30.4px;height:14.33px;background:#ececec'></div>
<div class='t' style='left:535.39px;width:30.2px;text-align:right;top:506.53px;font-size:10px;color:#000'>-</div>
<div class='abs' style='left:569.82px;top:503.33px;width:30.4px;height:14.33px;background:#ececec'></div>
<div class='t' style='left:569.82px;width:30.2px;text-align:right;top:506.53px;font-size:10px;color:#000'>-</div>
<div class='t' style='left:32px;width:53px;text-align:center;top:521.66px;font-size:10px;color:#fff;letter-spacing:0.05px'>June</div>
<div class='abs' style='left:87.80px;top:518.66px;width:30.4px;height:14.33px;background:#dcdcdc'></div>
<div class='t' style='left:87.80px;width:30.2px;text-align:right;top:521.87px;font-size:10px;color:#000'>-</div>
<div class='abs' style='left:122.23px;top:518.66px;width:30.4px;height:14.33px;background:#dcdcdc'></div>
<div class='t' style='left:122.23px;width:30.2px;text-align:right;top:521.87px;font-size:10px;color:#000'>-</div>
<div class='abs' style='left:156.66px;top:518.66px;width:30.4px;height:14.33px;background:#dcdcdc'></div>
<div class='t' style='left:156.66px;width:30.2px;text-align:right;top:521.87px;font-size:10px;color:#000'>-</div>
<div class='abs' style='left:191.09px;top:518.66px;width:30.4px;height:14.33px;background:#dcdcdc'></div>
<div class='t' style='left:191.09px;width:30.2px;text-align:right;top:521.87px;font-size:10px;color:#000'>-</div>
<div class='abs' style='left:225.52px;top:518.66px;width:30.4px;height:14.33px;background:#dcdcdc'></div>
<div class='t' style='left:225.52px;width:30.2px;text-align:right;top:521.87px;font-size:10px;color:#000'>-</div>
<div class='abs' style='left:259.95px;top:518.66px;width:30.4px;height:14.33px;background:#dcdcdc'></div>
<div class='t' style='left:259.95px;width:30.2px;text-align:right;top:521.87px;font-size:10px;color:#000'>-</div>
<div class='abs' style='left:294.38px;top:518.66px;width:30.4px;height:14.33px;background:#dcdcdc'></div>
<div class='t' style='left:294.38px;width:30.2px;text-align:right;top:521.87px;font-size:10px;color:#000'>-</div>
<div class='abs' style='left:328.81px;top:518.66px;width:30.4px;height:14.33px;background:#dcdcdc'></div>
<div class='t' style='left:328.81px;width:30.2px;text-align:right;top:521.87px;font-size:10px;color:#000'>-</div>
<div class='abs' style='left:363.24px;top:518.66px;width:30.4px;height:14.33px;background:#dcdcdc'></div>
<div class='t' style='left:363.24px;width:30.2px;text-align:right;top:521.87px;font-size:10px;color:#000'>-</div>
<div class='abs' style='left:397.67px;top:518.66px;width:30.4px;height:14.33px;background:#dcdcdc'></div>
<div class='t' style='left:397.67px;width:30.2px;text-align:right;top:521.87px;font-size:10px;color:#000'>-</div>
<div class='abs' style='left:432.10px;top:518.66px;width:30.4px;height:14.33px;background:#dcdcdc'></div>
<div class='t' style='left:432.10px;width:30.2px;text-align:right;top:521.87px;font-size:10px;color:#000'>-</div>
<div class='abs' style='left:466.53px;top:518.66px;width:30.4px;height:14.33px;background:#dcdcdc'></div>
<div class='t' style='left:466.53px;width:30.2px;text-align:right;top:521.87px;font-size:10px;color:#000'>-</div>
<div class='abs' style='left:500.96px;top:518.66px;width:30.4px;height:14.33px;background:#dcdcdc'></div>
<div class='t' style='left:500.96px;width:30.2px;text-align:right;top:521.87px;font-size:10px;color:#000'>-</div>
<div class='abs' style='left:535.39px;top:518.66px;width:30.4px;height:14.33px;background:#dcdcdc'></div>
<div class='t' style='left:535.39px;width:30.2px;text-align:right;top:521.87px;font-size:10px;color:#000'>-</div>
<div class='abs' style='left:569.82px;top:518.66px;width:30.4px;height:14.33px;background:#dcdcdc'></div>
<div class='t' style='left:569.82px;width:30.2px;text-align:right;top:521.87px;font-size:10px;color:#000'>-</div>
<div class='t' style='left:32px;width:53px;text-align:center;top:537.00px;font-size:10px;color:#fff;letter-spacing:0.05px'>July</div>
<div class='abs' style='left:87.80px;top:534.00px;width:30.4px;height:14.33px;background:#ececec'></div>
<div class='t' style='left:87.80px;width:30.2px;text-align:right;top:537.20px;font-size:10px;color:#000'>-</div>
<div class='abs' style='left:122.23px;top:534.00px;width:30.4px;height:14.33px;background:#ececec'></div>
<div class='t' style='left:122.23px;width:30.2px;text-align:right;top:537.20px;font-size:10px;color:#000'>-</div>
<div class='abs' style='left:156.66px;top:534.00px;width:30.4px;height:14.33px;background:#ececec'></div>
<div class='t' style='left:156.66px;width:30.2px;text-align:right;top:537.20px;font-size:10px;color:#000'>-</div>
<div class='abs' style='left:191.09px;top:534.00px;width:30.4px;height:14.33px;background:#ececec'></div>
<div class='t' style='left:191.09px;width:30.2px;text-align:right;top:537.20px;font-size:10px;color:#000'>-</div>
<div class='abs' style='left:225.52px;top:534.00px;width:30.4px;height:14.33px;background:#ececec'></div>
<div class='t' style='left:225.52px;width:30.2px;text-align:right;top:537.20px;font-size:10px;color:#000'>-</div>
<div class='abs' style='left:259.95px;top:534.00px;width:30.4px;height:14.33px;background:#ececec'></div>
<div class='t' style='left:259.95px;width:30.2px;text-align:right;top:537.20px;font-size:10px;color:#000'>-</div>
<div class='abs' style='left:294.38px;top:534.00px;width:30.4px;height:14.33px;background:#ececec'></div>
<div class='t' style='left:294.38px;width:30.2px;text-align:right;top:537.20px;font-size:10px;color:#000'>-</div>
<div class='abs' style='left:328.81px;top:534.00px;width:30.4px;height:14.33px;background:#ececec'></div>
<div class='t' style='left:328.81px;width:30.2px;text-align:right;top:537.20px;font-size:10px;color:#000'>-</div>
<div class='abs' style='left:363.24px;top:534.00px;width:30.4px;height:14.33px;background:#ececec'></div>
<div class='t' style='left:363.24px;width:30.2px;text-align:right;top:537.20px;font-size:10px;color:#000'>-</div>
<div class='abs' style='left:397.67px;top:534.00px;width:30.4px;height:14.33px;background:#ececec'></div>
<div class='t' style='left:397.67px;width:30.2px;text-align:right;top:537.20px;font-size:10px;color:#000'>-</div>
<div class='abs' style='left:432.10px;top:534.00px;width:30.4px;height:14.33px;background:#ececec'></div>
<div class='t' style='left:432.10px;width:30.2px;text-align:right;top:537.20px;font-size:10px;color:#000'>-</div>
<div class='abs' style='left:466.53px;top:534.00px;width:30.4px;height:14.33px;background:#ececec'></div>
<div class='t' style='left:466.53px;width:30.2px;text-align:right;top:537.20px;font-size:10px;color:#000'>-</div>
<div class='abs' style='left:500.96px;top:534.00px;width:30.4px;height:14.33px;background:#ececec'></div>
<div class='t' style='left:500.96px;width:30.2px;text-align:right;top:537.20px;font-size:10px;color:#000'>-</div>
<div class='abs' style='left:535.39px;top:534.00px;width:30.4px;height:14.33px;background:#80fa80'></div>
<div class='t' style='left:535.39px;width:30.2px;text-align:right;top:537.20px;font-size:10px;color:#000'>2199</div>
<div class='abs' style='left:569.82px;top:534.00px;width:30.4px;height:14.33px;background:#ececec'></div>
<div class='t' style='left:569.82px;width:30.2px;text-align:right;top:537.20px;font-size:10px;color:#000'>-</div>
<div class='t' style='left:32px;width:53px;text-align:center;top:552.33px;font-size:10px;color:#fff;letter-spacing:0.05px'>August</div>
<div class='abs' style='left:87.80px;top:549.33px;width:30.4px;height:14.33px;background:#dcdcdc'></div>
<div class='t' style='left:87.80px;width:30.2px;text-align:right;top:552.53px;font-size:10px;color:#000'>-</div>
<div class='abs' style='left:122.23px;top:549.33px;width:30.4px;height:14.33px;background:#dcdcdc'></div>
<div class='t' style='left:122.23px;width:30.2px;text-align:right;top:552.53px;font-size:10px;color:#000'>-</div>
<div class='abs' style='left:156.66px;top:549.33px;width:30.4px;height:14.33px;background:#dcdcdc'></div>
<div class='t' style='left:156.66px;width:30.2px;text-align:right;top:552.53px;font-size:10px;color:#000'>-</div>
<div class='abs' style='left:191.09px;top:549.33px;width:30.4px;height:14.33px;background:#dcdcdc'></div>
<div class='t' style='left:191.09px;width:30.2px;text-align:right;top:552.53px;font-size:10px;color:#000'>-</div>
<div class='abs' style='left:225.52px;top:549.33px;width:30.4px;height:14.33px;background:#dcdcdc'></div>
<div class='t' style='left:225.52px;width:30.2px;text-align:right;top:552.53px;font-size:10px;color:#000'>-</div>
<div class='abs' style='left:259.95px;top:549.33px;width:30.4px;height:14.33px;background:#dcdcdc'></div>
<div class='t' style='left:259.95px;width:30.2px;text-align:right;top:552.53px;font-size:10px;color:#000'>-</div>
<div class='abs' style='left:294.38px;top:549.33px;width:30.4px;height:14.33px;background:#dcdcdc'></div>
<div class='t' style='left:294.38px;width:30.2px;text-align:right;top:552.53px;font-size:10px;color:#000'>-</div>
<div class='abs' style='left:328.81px;top:549.33px;width:30.4px;height:14.33px;background:#dcdcdc'></div>
<div class='t' style='left:328.81px;width:30.2px;text-align:right;top:552.53px;font-size:10px;color:#000'>-</div>
<div class='abs' style='left:363.24px;top:549.33px;width:30.4px;height:14.33px;background:#dcdcdc'></div>
<div class='t' style='left:363.24px;width:30.2px;text-align:right;top:552.53px;font-size:10px;color:#000'>-</div>
<div class='abs' style='left:397.67px;top:549.33px;width:30.4px;height:14.33px;background:#dcdcdc'></div>
<div class='t' style='left:397.67px;width:30.2px;text-align:right;top:552.53px;font-size:10px;color:#000'>-</div>
<div class='abs' style='left:432.10px;top:549.33px;width:30.4px;height:14.33px;background:#dcdcdc'></div>
<div class='t' style='left:432.10px;width:30.2px;text-align:right;top:552.53px;font-size:10px;color:#000'>-</div>
<div class='abs' style='left:466.53px;top:549.33px;width:30.4px;height:14.33px;background:#dcdcdc'></div>
<div class='t' style='left:466.53px;width:30.2px;text-align:right;top:552.53px;font-size:10px;color:#000'>-</div>
<div class='abs' style='left:500.96px;top:549.33px;width:30.4px;height:14.33px;background:#dcdcdc'></div>
<div class='t' style='left:500.96px;width:30.2px;text-align:right;top:552.53px;font-size:10px;color:#000'>-</div>
<div class='abs' style='left:535.39px;top:549.33px;width:30.4px;height:14.33px;background:#80fa80'></div>
<div class='t' style='left:535.39px;width:30.2px;text-align:right;top:552.53px;font-size:10px;color:#000'>13286</div>
<div class='abs' style='left:569.82px;top:549.33px;width:30.4px;height:14.33px;background:#dcdcdc'></div>
<div class='t' style='left:569.82px;width:30.2px;text-align:right;top:552.53px;font-size:10px;color:#000'>-</div>
<div class='t' style='left:32px;width:53px;text-align:center;top:567.66px;font-size:10px;color:#fff;letter-spacing:0.05px'>September</div>
<div class='abs' style='left:87.80px;top:564.66px;width:30.4px;height:14.33px;background:#ececec'></div>
<div class='t' style='left:87.80px;width:30.2px;text-align:right;top:567.86px;font-size:10px;color:#000'>-</div>
<div class='abs' style='left:122.23px;top:564.66px;width:30.4px;height:14.33px;background:#ececec'></div>
<div class='t' style='left:122.23px;width:30.2px;text-align:right;top:567.86px;font-size:10px;color:#000'>-</div>
<div class='abs' style='left:156.66px;top:564.66px;width:30.4px;height:14.33px;background:#ececec'></div>
<div class='t' style='left:156.66px;width:30.2px;text-align:right;top:567.86px;font-size:10px;color:#000'>-</div>
<div class='abs' style='left:191.09px;top:564.66px;width:30.4px;height:14.33px;background:#ececec'></div>
<div class='t' style='left:191.09px;width:30.2px;text-align:right;top:567.86px;font-size:10px;color:#000'>-</div>
<div class='abs' style='left:225.52px;top:564.66px;width:30.4px;height:14.33px;background:#ececec'></div>
<div class='t' style='left:225.52px;width:30.2px;text-align:right;top:567.86px;font-size:10px;color:#000'>-</div>
<div class='abs' style='left:259.95px;top:564.66px;width:30.4px;height:14.33px;background:#ececec'></div>
<div class='t' style='left:259.95px;width:30.2px;text-align:right;top:567.86px;font-size:10px;color:#000'>-</div>
<div class='abs' style='left:294.38px;top:564.66px;width:30.4px;height:14.33px;background:#ececec'></div>
<div class='t' style='left:294.38px;width:30.2px;text-align:right;top:567.86px;font-size:10px;color:#000'>-</div>
<div class='abs' style='left:328.81px;top:564.66px;width:30.4px;height:14.33px;background:#ececec'></div>
<div class='t' style='left:328.81px;width:30.2px;text-align:right;top:567.86px;font-size:10px;color:#000'>-</div>
<div class='abs' style='left:363.24px;top:564.66px;width:30.4px;height:14.33px;background:#ececec'></div>
<div class='t' style='left:363.24px;width:30.2px;text-align:right;top:567.86px;font-size:10px;color:#000'>-</div>
<div class='abs' style='left:397.67px;top:564.66px;width:30.4px;height:14.33px;background:#ececec'></div>
<div class='t' style='left:397.67px;width:30.2px;text-align:right;top:567.86px;font-size:10px;color:#000'>-</div>
<div class='abs' style='left:432.10px;top:564.66px;width:30.4px;height:14.33px;background:#ececec'></div>
<div class='t' style='left:432.10px;width:30.2px;text-align:right;top:567.86px;font-size:10px;color:#000'>-</div>
<div class='abs' style='left:466.53px;top:564.66px;width:30.4px;height:14.33px;background:#ececec'></div>
<div class='t' style='left:466.53px;width:30.2px;text-align:right;top:567.86px;font-size:10px;color:#000'>-</div>
<div class='abs' style='left:500.96px;top:564.66px;width:30.4px;height:14.33px;background:#ececec'></div>
<div class='t' style='left:500.96px;width:30.2px;text-align:right;top:567.86px;font-size:10px;color:#000'>-</div>
<div class='abs' style='left:535.39px;top:564.66px;width:30.4px;height:14.33px;background:#80fa80'></div>
<div class='t' style='left:535.39px;width:30.2px;text-align:right;top:567.86px;font-size:10px;color:#000'>15124</div>
<div class='abs' style='left:569.82px;top:564.66px;width:30.4px;height:14.33px;background:#ececec'></div>
<div class='t' style='left:569.82px;width:30.2px;text-align:right;top:567.86px;font-size:10px;color:#000'>-</div>
<div class='t' style='left:32px;width:53px;text-align:center;top:583.00px;font-size:10px;color:#fff;letter-spacing:0.05px'>October</div>
<div class='abs' style='left:87.80px;top:580.00px;width:30.4px;height:14.33px;background:#dcdcdc'></div>
<div class='t' style='left:87.80px;width:30.2px;text-align:right;top:583.20px;font-size:10px;color:#000'>-</div>
<div class='abs' style='left:122.23px;top:580.00px;width:30.4px;height:14.33px;background:#dcdcdc'></div>
<div class='t' style='left:122.23px;width:30.2px;text-align:right;top:583.20px;font-size:10px;color:#000'>-</div>
<div class='abs' style='left:156.66px;top:580.00px;width:30.4px;height:14.33px;background:#dcdcdc'></div>
<div class='t' style='left:156.66px;width:30.2px;text-align:right;top:583.20px;font-size:10px;color:#000'>-</div>
<div class='abs' style='left:191.09px;top:580.00px;width:30.4px;height:14.33px;background:#dcdcdc'></div>
<div class='t' style='left:191.09px;width:30.2px;text-align:right;top:583.20px;font-size:10px;color:#000'>-</div>
<div class='abs' style='left:225.52px;top:580.00px;width:30.4px;height:14.33px;background:#dcdcdc'></div>
<div class='t' style='left:225.52px;width:30.2px;text-align:right;top:583.20px;font-size:10px;color:#000'>-</div>
<div class='abs' style='left:259.95px;top:580.00px;width:30.4px;height:14.33px;background:#dcdcdc'></div>
<div class='t' style='left:259.95px;width:30.2px;text-align:right;top:583.20px;font-size:10px;color:#000'>-</div>
<div class='abs' style='left:294.38px;top:580.00px;width:30.4px;height:14.33px;background:#dcdcdc'></div>
<div class='t' style='left:294.38px;width:30.2px;text-align:right;top:583.20px;font-size:10px;color:#000'>-</div>
<div class='abs' style='left:328.81px;top:580.00px;width:30.4px;height:14.33px;background:#dcdcdc'></div>
<div class='t' style='left:328.81px;width:30.2px;text-align:right;top:583.20px;font-size:10px;color:#000'>-</div>
<div class='abs' style='left:363.24px;top:580.00px;width:30.4px;height:14.33px;background:#dcdcdc'></div>
<div class='t' style='left:363.24px;width:30.2px;text-align:right;top:583.20px;font-size:10px;color:#000'>-</div>
<div class='abs' style='left:397.67px;top:580.00px;width:30.4px;height:14.33px;background:#dcdcdc'></div>
<div class='t' style='left:397.67px;width:30.2px;text-align:right;top:583.20px;font-size:10px;color:#000'>-</div>
<div class='abs' style='left:432.10px;top:580.00px;width:30.4px;height:14.33px;background:#dcdcdc'></div>
<div class='t' style='left:432.10px;width:30.2px;text-align:right;top:583.20px;font-size:10px;color:#000'>-</div>
<div class='abs' style='left:466.53px;top:580.00px;width:30.4px;height:14.33px;background:#dcdcdc'></div>
<div class='t' style='left:466.53px;width:30.2px;text-align:right;top:583.20px;font-size:10px;color:#000'>-</div>
<div class='abs' style='left:500.96px;top:580.00px;width:30.4px;height:14.33px;background:#dcdcdc'></div>
<div class='t' style='left:500.96px;width:30.2px;text-align:right;top:583.20px;font-size:10px;color:#000'>-</div>
<div class='abs' style='left:535.39px;top:580.00px;width:30.4px;height:14.33px;background:#80fa80'></div>
<div class='t' style='left:535.39px;width:30.2px;text-align:right;top:583.20px;font-size:10px;color:#000'>18987</div>
<div class='abs' style='left:569.82px;top:580.00px;width:30.4px;height:14.33px;background:#dcdcdc'></div>
<div class='t' style='left:569.82px;width:30.2px;text-align:right;top:583.20px;font-size:10px;color:#000'>-</div>
<div class='t' style='left:32px;width:53px;text-align:center;top:598.33px;font-size:10px;color:#fff;letter-spacing:0.05px'>November</div>
<div class='abs' style='left:87.80px;top:595.33px;width:30.4px;height:14.33px;background:#ececec'></div>
<div class='t' style='left:87.80px;width:30.2px;text-align:right;top:598.53px;font-size:10px;color:#000'>-</div>
<div class='abs' style='left:122.23px;top:595.33px;width:30.4px;height:14.33px;background:#ececec'></div>
<div class='t' style='left:122.23px;width:30.2px;text-align:right;top:598.53px;font-size:10px;color:#000'>-</div>
<div class='abs' style='left:156.66px;top:595.33px;width:30.4px;height:14.33px;background:#ececec'></div>
<div class='t' style='left:156.66px;width:30.2px;text-align:right;top:598.53px;font-size:10px;color:#000'>-</div>
<div class='abs' style='left:191.09px;top:595.33px;width:30.4px;height:14.33px;background:#ececec'></div>
<div class='t' style='left:191.09px;width:30.2px;text-align:right;top:598.53px;font-size:10px;color:#000'>-</div>
<div class='abs' style='left:225.52px;top:595.33px;width:30.4px;height:14.33px;background:#ececec'></div>
<div class='t' style='left:225.52px;width:30.2px;text-align:right;top:598.53px;font-size:10px;color:#000'>-</div>
<div class='abs' style='left:259.95px;top:595.33px;width:30.4px;height:14.33px;background:#ececec'></div>
<div class='t' style='left:259.95px;width:30.2px;text-align:right;top:598.53px;font-size:10px;color:#000'>-</div>
<div class='abs' style='left:294.38px;top:595.33px;width:30.4px;height:14.33px;background:#ececec'></div>
<div class='t' style='left:294.38px;width:30.2px;text-align:right;top:598.53px;font-size:10px;color:#000'>-</div>
<div class='abs' style='left:328.81px;top:595.33px;width:30.4px;height:14.33px;background:#ececec'></div>
<div class='t' style='left:328.81px;width:30.2px;text-align:right;top:598.53px;font-size:10px;color:#000'>-</div>
<div class='abs' style='left:363.24px;top:595.33px;width:30.4px;height:14.33px;background:#ececec'></div>
<div class='t' style='left:363.24px;width:30.2px;text-align:right;top:598.53px;font-size:10px;color:#000'>-</div>
<div class='abs' style='left:397.67px;top:595.33px;width:30.4px;height:14.33px;background:#ececec'></div>
<div class='t' style='left:397.67px;width:30.2px;text-align:right;top:598.53px;font-size:10px;color:#000'>-</div>
<div class='abs' style='left:432.10px;top:595.33px;width:30.4px;height:14.33px;background:#ececec'></div>
<div class='t' style='left:432.10px;width:30.2px;text-align:right;top:598.53px;font-size:10px;color:#000'>-</div>
<div class='abs' style='left:466.53px;top:595.33px;width:30.4px;height:14.33px;background:#ececec'></div>
<div class='t' style='left:466.53px;width:30.2px;text-align:right;top:598.53px;font-size:10px;color:#000'>-</div>
<div class='abs' style='left:500.96px;top:595.33px;width:30.4px;height:14.33px;background:#ececec'></div>
<div class='t' style='left:500.96px;width:30.2px;text-align:right;top:598.53px;font-size:10px;color:#000'>-</div>
<div class='abs' style='left:535.39px;top:595.33px;width:30.4px;height:14.33px;background:#80fa80'></div>
<div class='t' style='left:535.39px;width:30.2px;text-align:right;top:598.53px;font-size:10px;color:#000'>15861</div>
<div class='abs' style='left:569.82px;top:595.33px;width:30.4px;height:14.33px;background:#ececec'></div>
<div class='t' style='left:569.82px;width:30.2px;text-align:right;top:598.53px;font-size:10px;color:#000'>-</div>
<div class='t' style='left:32px;width:53px;text-align:center;top:613.66px;font-size:10px;color:#fff;letter-spacing:0.05px'>December</div>
<div class='abs' style='left:87.80px;top:610.66px;width:30.4px;height:14.33px;background:#dcdcdc'></div>
<div class='t' style='left:87.80px;width:30.2px;text-align:right;top:613.86px;font-size:10px;color:#000'>-</div>
<div class='abs' style='left:122.23px;top:610.66px;width:30.4px;height:14.33px;background:#dcdcdc'></div>
<div class='t' style='left:122.23px;width:30.2px;text-align:right;top:613.86px;font-size:10px;color:#000'>-</div>
<div class='abs' style='left:156.66px;top:610.66px;width:30.4px;height:14.33px;background:#dcdcdc'></div>
<div class='t' style='left:156.66px;width:30.2px;text-align:right;top:613.86px;font-size:10px;color:#000'>-</div>
<div class='abs' style='left:191.09px;top:610.66px;width:30.4px;height:14.33px;background:#dcdcdc'></div>
<div class='t' style='left:191.09px;width:30.2px;text-align:right;top:613.86px;font-size:10px;color:#000'>-</div>
<div class='abs' style='left:225.52px;top:610.66px;width:30.4px;height:14.33px;background:#dcdcdc'></div>
<div class='t' style='left:225.52px;width:30.2px;text-align:right;top:613.86px;font-size:10px;color:#000'>-</div>
<div class='abs' style='left:259.95px;top:610.66px;width:30.4px;height:14.33px;background:#dcdcdc'></div>
<div class='t' style='left:259.95px;width:30.2px;text-align:right;top:613.86px;font-size:10px;color:#000'>-</div>
<div class='abs' style='left:294.38px;top:610.66px;width:30.4px;height:14.33px;background:#dcdcdc'></div>
<div class='t' style='left:294.38px;width:30.2px;text-align:right;top:613.86px;font-size:10px;color:#000'>-</div>
<div class='abs' style='left:328.81px;top:610.66px;width:30.4px;height:14.33px;background:#dcdcdc'></div>
<div class='t' style='left:328.81px;width:30.2px;text-align:right;top:613.86px;font-size:10px;color:#000'>-</div>
<div class='abs' style='left:363.24px;top:610.66px;width:30.4px;height:14.33px;background:#dcdcdc'></div>
<div class='t' style='left:363.24px;width:30.2px;text-align:right;top:613.86px;font-size:10px;color:#000'>-</div>
<div class='abs' style='left:397.67px;top:610.66px;width:30.4px;height:14.33px;background:#dcdcdc'></div>
<div class='t' style='left:397.67px;width:30.2px;text-align:right;top:613.86px;font-size:10px;color:#000'>-</div>
<div class='abs' style='left:432.10px;top:610.66px;width:30.4px;height:14.33px;background:#dcdcdc'></div>
<div class='t' style='left:432.10px;width:30.2px;text-align:right;top:613.86px;font-size:10px;color:#000'>-</div>
<div class='abs' style='left:466.53px;top:610.66px;width:30.4px;height:14.33px;background:#dcdcdc'></div>
<div class='t' style='left:466.53px;width:30.2px;text-align:right;top:613.86px;font-size:10px;color:#000'>-</div>
<div class='abs' style='left:500.96px;top:610.66px;width:30.4px;height:14.33px;background:#dcdcdc'></div>
<div class='t' style='left:500.96px;width:30.2px;text-align:right;top:613.86px;font-size:10px;color:#000'>-</div>
<div class='abs' style='left:535.39px;top:610.66px;width:30.4px;height:14.33px;background:#80fa80'></div>
<div class='t' style='left:535.39px;width:30.2px;text-align:right;top:613.86px;font-size:10px;color:#000'>3286</div>
<div class='abs' style='left:569.82px;top:610.66px;width:30.4px;height:14.33px;background:#dcdcdc'></div>
<div class='t' style='left:569.82px;width:30.2px;text-align:right;top:613.86px;font-size:10px;color:#000'>-</div>
<div class='t' style='left:32px;width:53px;text-align:center;top:629.00px;font-size:10px;color:#fff;letter-spacing:0.05px'>Total</div>
<div class='abs' style='left:87.80px;top:626.00px;width:30.4px;height:14.33px;background:#cccccc'></div>
<div class='t' style='left:87.80px;width:30.2px;text-align:right;top:629.20px;font-size:10px;color:#000'>0</div>
<div class='abs' style='left:122.23px;top:626.00px;width:30.4px;height:14.33px;background:#cccccc'></div>
<div class='t' style='left:122.23px;width:30.2px;text-align:right;top:629.20px;font-size:10px;color:#000'>0</div>
<div class='abs' style='left:156.66px;top:626.00px;width:30.4px;height:14.33px;background:#cccccc'></div>
<div class='t' style='left:156.66px;width:30.2px;text-align:right;top:629.20px;font-size:10px;color:#000'>0</div>
<div class='abs' style='left:191.09px;top:626.00px;width:30.4px;height:14.33px;background:#cccccc'></div>
<div class='t' style='left:191.09px;width:30.2px;text-align:right;top:629.20px;font-size:10px;color:#000'>0</div>
<div class='abs' style='left:225.52px;top:626.00px;width:30.4px;height:14.33px;background:#cccccc'></div>
<div class='t' style='left:225.52px;width:30.2px;text-align:right;top:629.20px;font-size:10px;color:#000'>0</div>
<div class='abs' style='left:259.95px;top:626.00px;width:30.4px;height:14.33px;background:#cccccc'></div>
<div class='t' style='left:259.95px;width:30.2px;text-align:right;top:629.20px;font-size:10px;color:#000'>0</div>
<div class='abs' style='left:294.38px;top:626.00px;width:30.4px;height:14.33px;background:#cccccc'></div>
<div class='t' style='left:294.38px;width:30.2px;text-align:right;top:629.20px;font-size:10px;color:#000'>0</div>
<div class='abs' style='left:328.81px;top:626.00px;width:30.4px;height:14.33px;background:#cccccc'></div>
<div class='t' style='left:328.81px;width:30.2px;text-align:right;top:629.20px;font-size:10px;color:#000'>0</div>
<div class='abs' style='left:363.24px;top:626.00px;width:30.4px;height:14.33px;background:#cccccc'></div>
<div class='t' style='left:363.24px;width:30.2px;text-align:right;top:629.20px;font-size:10px;color:#000'>0</div>
<div class='abs' style='left:397.67px;top:626.00px;width:30.4px;height:14.33px;background:#cccccc'></div>
<div class='t' style='left:397.67px;width:30.2px;text-align:right;top:629.20px;font-size:10px;color:#000'>0</div>
<div class='abs' style='left:432.10px;top:626.00px;width:30.4px;height:14.33px;background:#cccccc'></div>
<div class='t' style='left:432.10px;width:30.2px;text-align:right;top:629.20px;font-size:10px;color:#000'>0</div>
<div class='abs' style='left:466.53px;top:626.00px;width:30.4px;height:14.33px;background:#cccccc'></div>
<div class='t' style='left:466.53px;width:30.2px;text-align:right;top:629.20px;font-size:10px;color:#000'>0</div>
<div class='abs' style='left:500.96px;top:626.00px;width:30.4px;height:14.33px;background:#cccccc'></div>
<div class='t' style='left:500.96px;width:30.2px;text-align:right;top:629.20px;font-size:10px;color:#000'>0</div>
<div class='abs' style='left:535.39px;top:626.00px;width:30.4px;height:14.33px;background:#cccccc'></div>
<div class='t' style='left:535.39px;width:30.2px;text-align:right;top:629.20px;font-size:10px;color:#000'>68743</div>
<div class='abs' style='left:569.82px;top:626.00px;width:30.4px;height:14.33px;background:#cccccc'></div>
<div class='t' style='left:569.82px;width:30.2px;text-align:right;top:629.20px;font-size:10px;color:#000'>0</div>
</body></html>
